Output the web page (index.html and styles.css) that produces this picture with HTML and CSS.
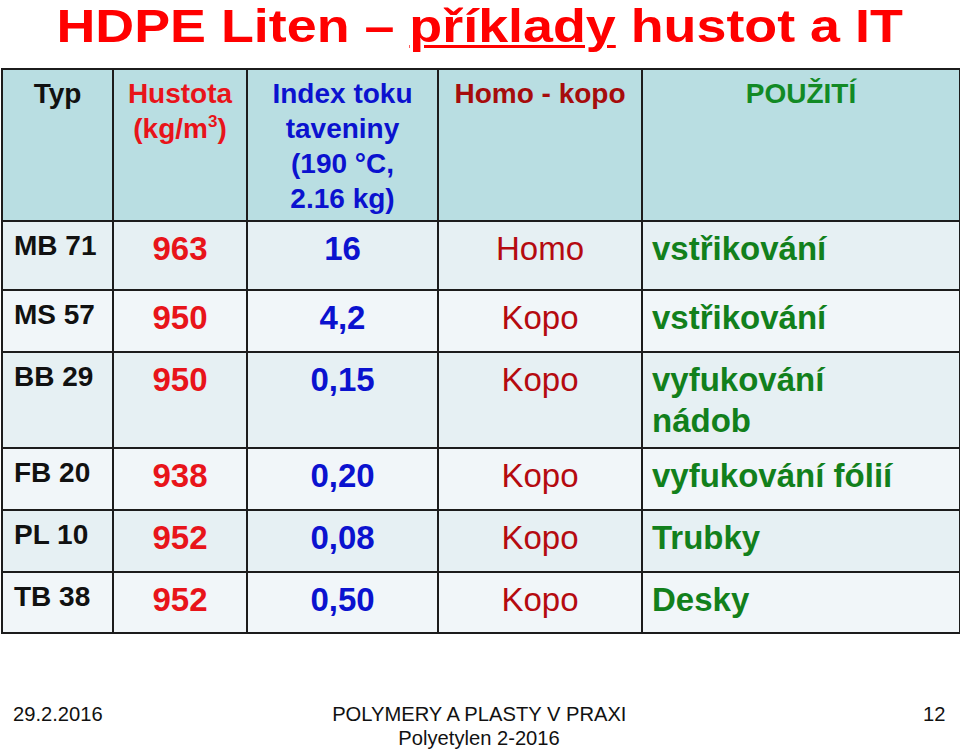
FILE: index.html
```html
<!DOCTYPE html>
<html lang="cs">
<head>
<meta charset="utf-8">
<title>HDPE Liten – příklady hustot a IT</title>
<link rel="stylesheet" href="styles.css">
</head>
<body>
<div class="slide">
  <h1 class="title">HDPE Liten – <span class="u">příklady</span> hustot a IT</h1>
  <table class="grid">
    <colgroup>
      <col class="w1"><col class="w2"><col class="w3"><col class="w4"><col class="w5">
    </colgroup>
    <thead>
      <tr class="head">
        <th class="h-typ">Typ</th>
        <th class="h-red">Hustota<br>(kg/m<sup>3</sup>)</th>
        <th class="h-blue">Index toku<br>taveniny<br>(190 °C,<br>2.16 kg)</th>
        <th class="h-dred">Homo - kopo</th>
        <th class="h-green">POUŽITÍ</th>
      </tr>
    </thead>
    <tbody>
      <tr class="odd r69">
        <td class="typ">MB 71</td><td class="red">963</td><td class="blue">16</td><td class="dred">Homo</td><td class="green">vstřikování</td>
      </tr>
      <tr class="even r62">
        <td class="typ">MS 57</td><td class="red">950</td><td class="blue">4,2</td><td class="dred">Kopo</td><td class="green">vstřikování</td>
      </tr>
      <tr class="odd r96">
        <td class="typ">BB 29</td><td class="red">950</td><td class="blue">0,15</td><td class="dred">Kopo</td><td class="green">vyfukování<br>nádob</td>
      </tr>
      <tr class="even r62">
        <td class="typ">FB 20</td><td class="red">938</td><td class="blue">0,20</td><td class="dred">Kopo</td><td class="green">vyfukování fólií</td>
      </tr>
      <tr class="odd r62">
        <td class="typ">PL 10</td><td class="red">952</td><td class="blue">0,08</td><td class="dred">Kopo</td><td class="green">Trubky</td>
      </tr>
      <tr class="even r61">
        <td class="typ">TB 38</td><td class="red">952</td><td class="blue">0,50</td><td class="dred">Kopo</td><td class="green">Desky</td>
      </tr>
    </tbody>
  </table>
  <footer class="foot">
    <div class="f-left"><span class="narrow nl">29.2.2016</span></div>
    <div class="f-mid"><span class="narrow nc">POLYMERY A PLASTY V PRAXI</span><span class="narrow nc">Polyetylen 2-2016</span></div>
    <div class="f-right"><span class="narrow nr">12</span></div>
  </footer>
</div>
</body>
</html>
```

FILE: styles.css
```css
html, body {
  margin: 0;
  padding: 0;
  background: #ffffff;
}

.slide {
  width: 960px;
  height: 753px;
  overflow: hidden;
  font-family: "Liberation Sans", Arial, sans-serif;
}

.title {
  margin: 0 0 16px 0;
  font-size: 46px;
  line-height: 52px;
  font-weight: bold;
  color: #ff0000;
  text-align: center;
  white-space: nowrap;
  transform: scaleX(1.17);
  transform-origin: 482px 0;
}

.title .u {
  text-decoration: underline;
  text-decoration-thickness: 3px;
  text-underline-offset: 3px;
}

.grid {
  margin-left: 1px;
  width: 958px;
  table-layout: fixed;
  border-collapse: collapse;
  border: 2px solid #1c1c1c;
}

.w1 { width: 111px; }
.w2 { width: 134px; }
.w3 { width: 191px; }
.w4 { width: 204px; }
.w5 { width: 318px; }

.grid th,
.grid td {
  border: 2px solid #1c1c1c;
  vertical-align: top;
  padding: 6px 0 0 0;
}

.head th {
  background: #b9dee2;
  font-size: 28px;
  line-height: 35px;
  font-weight: bold;
  text-align: center;
  height: 144px;
}

.head sup {
  font-size: 17px;
  line-height: 0;
  vertical-align: 11px;
}

.h-typ { color: #111111; }
.h-red { color: #e8141a; }
.h-blue { color: #0b12cf; }
.h-dred { color: #a60c0c; }
.h-green { color: #128a25; }

.odd td { background: #e6f0f3; }
.even td { background: #f1f6f9; }

.r69 td { height: 61px; }
.r62 td { height: 54px; }
.r96 td { height: 88px; }
.r61 td { height: 53px; }

.grid td {
  font-size: 33px;
  line-height: 41px;
  font-weight: bold;
  text-align: center;
}

.grid td.typ {
  font-size: 28px;
  line-height: 35px;
  text-align: left;
  padding-left: 11px;
  color: #111111;
}

.grid td.red { color: #e8141a; }
.grid td.blue { color: #0b12cf; }
.grid td.dred { color: #b50a10; font-weight: normal; }
.grid td.green { color: #12801c; text-align: left; padding-left: 9px; }

.foot {
  margin-top: 68px;
  display: flex;
  align-items: flex-start;
  font-size: 21px;
  line-height: 24px;
  color: #111111;
}

.narrow {
  display: block;
  white-space: nowrap;
  transform: scaleX(0.96);
}

.f-left {
  width: 200px;
  padding-left: 13px;
}
.nl { transform-origin: left top; }

.f-mid {
  flex: 1;
  display: flex;
  flex-direction: column;
  align-items: center;
}
.nc { transform-origin: center top; }

.f-right {
  width: 200px;
  padding-right: 15px;
  display: flex;
  justify-content: flex-end;
}
.nr { transform-origin: right top; }
```
